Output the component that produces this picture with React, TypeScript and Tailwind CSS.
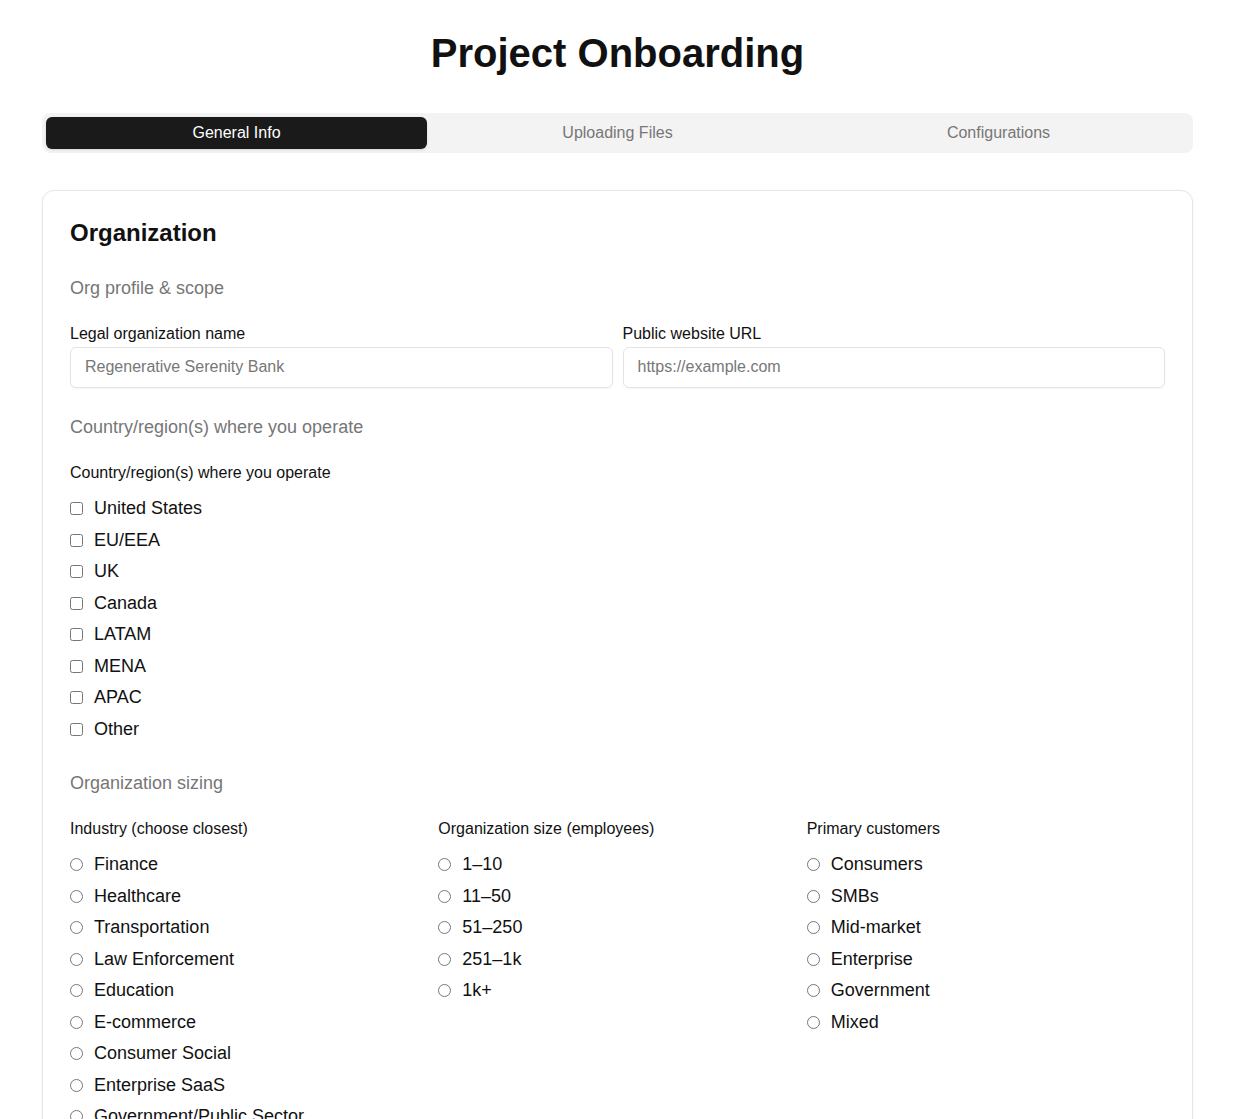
import React, { useState } from 'react';

const tabs = ['General Info', 'Uploading Files', 'Configurations'];

const regions = ['United States', 'EU/EEA', 'UK', 'Canada', 'LATAM', 'MENA', 'APAC', 'Other'];

const industries = [
    'Finance',
    'Healthcare',
    'Transportation',
    'Law Enforcement',
    'Education',
    'E-commerce',
    'Consumer Social',
    'Enterprise SaaS',
    'Government/Public Sector',
    'Other',
];

const sizes = ['1–10', '11–50', '51–250', '251–1k', '1k+'];

const customers = ['Consumers', 'SMBs', 'Mid-market', 'Enterprise', 'Government', 'Mixed'];

const SectionTitle: React.FC<{ children: React.ReactNode }> = ({ children }) => (
    <h3 className="text-[18px] leading-[27px] text-[#767676] mb-[20px]">{children}</h3>
);

const FieldLabel: React.FC<{ children: React.ReactNode }> = ({ children }) => (
    <label className="block text-[16px] leading-[24px] text-[#111]">{children}</label>
);

const OptionList: React.FC<{ name: string; type: 'checkbox' | 'radio'; options: string[] }> = ({ name, type, options }) => (
    <div className="flex flex-col gap-[4.5px] mt-[10.5px]">
        {options.map((opt) => (
            <label key={opt} className="flex items-center gap-[11px] text-[18px] leading-[27px] text-[#111]">
                <input type={type} name={name} className="w-[13px] h-[13px] shrink-0" />
                <span>{opt}</span>
            </label>
        ))}
    </div>
);

const App: React.FC = () => {
    const [active, setActive] = useState(0);

    return (
        <div className="min-h-screen bg-white font-['Liberation_Sans',Arial,sans-serif] text-[#111]">
            <div className="max-w-[1151px] ml-[42px] pt-[29px] pb-10">
                <h1 className="text-center text-[40px] leading-[48px] font-bold text-[#111]">Project Onboarding</h1>

                {/* tabs */}
                <div className="mt-9 grid grid-cols-3 gap-0 bg-[#f3f3f3] rounded-lg px-[4px] py-[4px] h-10">
                    {tabs.map((tab, i) => (
                        <button
                            key={tab}
                            onClick={() => setActive(i)}
                            className={`rounded-md text-[16px] ${
                                i === active ? 'bg-[#1a1a1a] text-white shadow-sm' : 'text-[#777]'
                            }`}
                        >
                            {tab}
                        </button>
                    ))}
                </div>

                {/* card */}
                <div className="mt-[37px] bg-white border border-[#e6e6e6] rounded-xl shadow-[0_1px_3px_rgba(0,0,0,0.06)] px-[27px] pt-[26px] pb-10">
                    <h2 className="text-[24px] leading-[32px] font-bold text-[#111]">Organization</h2>

                    <div className="mt-[25.5px]">
                        <SectionTitle>Org profile &amp; scope</SectionTitle>
                        <div className="grid grid-cols-2 gap-2.5">
                            <div>
                                <FieldLabel>Legal organization name</FieldLabel>
                                <input
                                    type="text"
                                    placeholder="Regenerative Serenity Bank"
                                    className="mt-[1px] w-full h-[41px] px-[14px] rounded-md border border-[#e3e3e3] shadow-[0_1px_2px_rgba(0,0,0,0.04)] text-[16px] placeholder:text-[#777] outline-none"
                                />
                            </div>
                            <div>
                                <FieldLabel>Public website URL</FieldLabel>
                                <input
                                    type="text"
                                    placeholder="https://example.com"
                                    className="mt-[1px] w-full h-[41px] px-[14px] rounded-md border border-[#e3e3e3] shadow-[0_1px_2px_rgba(0,0,0,0.04)] text-[16px] placeholder:text-[#777] outline-none"
                                />
                            </div>
                        </div>
                    </div>

                    <div className="mt-[26px]">
                        <SectionTitle>Country/region(s) where you operate</SectionTitle>
                        <FieldLabel>Country/region(s) where you operate</FieldLabel>
                        <OptionList name="regions" type="checkbox" options={regions} />
                    </div>

                    <div className="mt-[27px]">
                        <SectionTitle>Organization sizing</SectionTitle>
                        <div className="grid grid-cols-3 gap-2.5">
                            <div>
                                <FieldLabel>Industry (choose closest)</FieldLabel>
                                <OptionList name="industry" type="radio" options={industries} />
                            </div>
                            <div>
                                <FieldLabel>Organization size (employees)</FieldLabel>
                                <OptionList name="size" type="radio" options={sizes} />
                            </div>
                            <div>
                                <FieldLabel>Primary customers</FieldLabel>
                                <OptionList name="customers" type="radio" options={customers} />
                            </div>
                        </div>
                    </div>
                </div>
            </div>
        </div>
    );
};

export default App;
